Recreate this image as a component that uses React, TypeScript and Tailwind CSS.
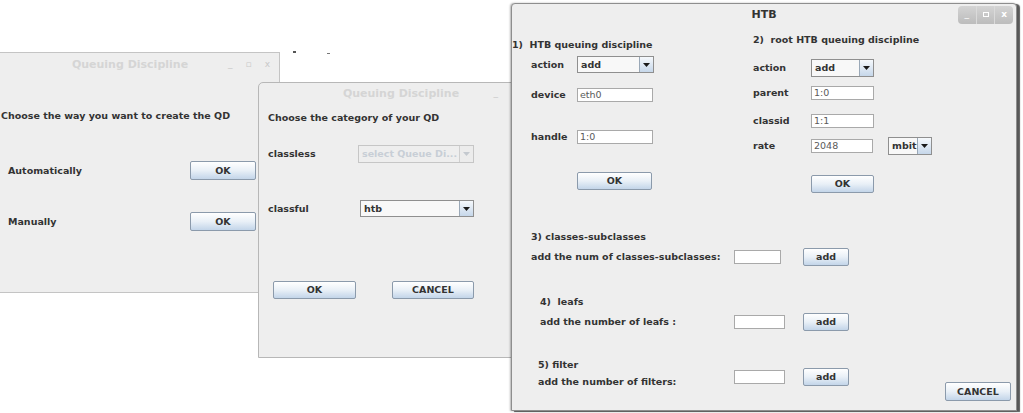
import React from "react";

const FONT = "font-['DejaVu_Sans',sans-serif]";

function Arrow({ disabled }: { disabled?: boolean }) {
  return (
    <svg width="7" height="4" viewBox="0 0 7 4">
      <polygon points="0,0 7,0 3.5,4" fill={disabled ? "#c4c9cf" : "#1a1a1a"} />
    </svg>
  );
}

function Btn({ className, children }: { className: string; children: React.ReactNode }) {
  return (
    <div
      className={`flex items-center justify-center shrink-0 border border-[#8b9aab] rounded-[2px] bg-linear-to-b from-[#ffffff] via-[#e9f0f7] to-[#c3d5e9] text-[#333333] font-bold text-[9.5px] leading-none ${className}`}
    >
      {children}
    </div>
  );
}

function Combo({ className, text, disabled }: { className: string; text: string; disabled?: boolean }) {
  return (
    <div
      className={`flex shrink-0 border ${disabled ? "border-[#c6c6c6] bg-[#eeeeee]" : "border-[#8f8f8f] bg-[#f8f8f8]"} ${className}`}
    >
      <div
        className={`flex-1 flex items-center pl-[3px] font-bold text-[9.5px] leading-none overflow-hidden whitespace-nowrap ${disabled ? "text-[#c8ced6]" : "text-[#333333]"}`}
      >
        {text}
      </div>
      <div
        className={`w-[14px] shrink-0 flex items-center justify-center border-l ${disabled ? "border-[#cfcfcf] bg-[#ececec]" : "border-[#9aa8b7] bg-linear-to-b from-[#f6f9fc] to-[#c6d7ea]"}`}
      >
        <Arrow disabled={disabled} />
      </div>
    </div>
  );
}

function Field({ className, text }: { className: string; text?: string }) {
  return (
    <div
      className={`flex items-center shrink-0 bg-white border border-[#a9a9a9] pl-[2px] font-normal text-[9.5px] leading-none text-[#5a5a5a] ${className}`}
    >
      {text}
    </div>
  );
}

function Lbl({ className, children }: { className: string; children: React.ReactNode }) {
  return <div className={`shrink-0 whitespace-nowrap leading-[12px] ${className}`}>{children}</div>;
}

export default function App() {
  return (
    <div className={`relative w-[1023px] h-[413px] overflow-hidden bg-white ${FONT}`}>
      {/* tiny marks behind */}
      <div className="absolute left-[293px] top-[51px] w-[3px] h-[2px] bg-[#555555]" />
      <div className="absolute left-[327px] top-[53px] w-[3px] h-[1px] bg-[#777777]" />

      {/* Window 1 */}
      <div className="absolute left-[-12px] top-[52px] w-[292px] h-[241px] bg-[#eeeeee] border border-[#c4c4c4] flex flex-col">
        <div className="h-[22px] grid grid-cols-[1fr_auto_1fr] items-center">
          <div />
          <div className="font-bold text-[11px] text-[#d5d5d5] leading-none -translate-x-[4px]">Queuing Discipline</div>
          <div className="flex justify-end items-center gap-[13px] pr-[9px] text-[9px] text-[#c9c9c9] leading-none">
            <span>_</span>
            <span>▫</span>
            <span>x</span>
          </div>
        </div>
        <div className="flex flex-col pl-[12px] text-[#333333] font-bold text-[9.5px]">
          <Lbl className="mt-[35px] h-[12px]">Choose the way you want to create the QD</Lbl>
          <div className="mt-[39px] flex items-center h-[19px]">
            <Lbl className="w-[189px] pl-[7px]">Automatically</Lbl>
            <Btn className="w-[66px] h-[19px]">OK</Btn>
          </div>
          <div className="mt-[32px] flex items-center h-[19px]">
            <Lbl className="w-[189px] pl-[7px]">Manually</Lbl>
            <Btn className="w-[66px] h-[19px]">OK</Btn>
          </div>
        </div>
      </div>

      {/* Window 2 */}
      <div className="absolute left-[258px] top-[82px] w-[286px] h-[276px] bg-[#eeeeee] border border-[#b7b7b7] rounded-t-[5px] flex flex-col">
        <div className="h-[20px] grid grid-cols-[1fr_auto_1fr] items-center">
          <div />
          <div className="font-bold text-[11px] text-[#d5d5d5] leading-none">Queuing Discipline</div>
          <div className="flex justify-end items-center pr-[45px] text-[9px] text-[#c9c9c9] leading-none">
            <span>_</span>
          </div>
        </div>
        <div className="flex flex-col pl-[9px] text-[#333333] font-bold text-[9.5px]">
          <Lbl className="mt-[9px] h-[12px]">Choose the category of your QD</Lbl>
          <div className="mt-[21px] flex items-center h-[18px]">
            <Lbl className="w-[90px]">classless</Lbl>
            <Combo className="w-[116px] h-[18px]" text="select Queue Di..." disabled />
          </div>
          <div className="mt-[37px] flex items-center h-[17px]">
            <Lbl className="w-[92px]">classful</Lbl>
            <Combo className="w-[114px] h-[17px]" text="htb" />
          </div>
          <div className="mt-[64px] flex items-center pl-[5px]">
            <Btn className="w-[83px] h-[18px]">OK</Btn>
            <Btn className="w-[82px] h-[18px] ml-[36px]">CANCEL</Btn>
          </div>
        </div>
      </div>

      {/* Window 3 - HTB */}
      <div className="absolute left-[511px] top-[3px] w-[506px] h-[408px] bg-[#eeeeee] border border-[#8e8e8e] rounded-t-[4px] shadow-[-1px_0_2px_rgba(0,0,0,0.3),3px_1px_1px_rgba(0,0,0,0.65)] flex flex-col">
        <div className="h-[21px] grid grid-cols-[1fr_auto_1fr] items-center">
          <div />
          <div className="font-bold text-[11px] text-[#333333] leading-none">HTB</div>
          <div className="flex justify-end pr-[3px]">
            <div className="flex h-[18px] w-[55px] rounded-[4px] bg-linear-to-b from-[#d4d4d4] to-[#bcbcbc] text-white text-[9px] leading-none overflow-hidden">
              <div className="flex-1 flex items-end justify-center pb-[5px] border-r border-[#dadada]">_</div>
              <div className="flex-1 flex items-center justify-center border-r border-[#dadada]">
                <div className="w-[6px] h-[5px] border-[1.5px] border-white" />
              </div>
              <div className="flex-1 flex items-center justify-center font-bold">x</div>
            </div>
          </div>
        </div>

        <div className="flex-1 flex flex-col text-[#333333] font-bold text-[9.5px]">
          <div className="flex items-start">
            {/* Column 1 */}
            <div className="w-[241px] flex flex-col">
              <Lbl className="mt-[14px] h-[12px] whitespace-pre">1)  HTB queuing discipline</Lbl>
              <div className="mt-[5px] flex items-center h-[17px] pl-[19px]">
                <Lbl className="w-[46px]">action</Lbl>
                <Combo className="w-[77px] h-[17px]" text="add" />
              </div>
              <div className="mt-[15px] flex items-center h-[14px] pl-[19px]">
                <Lbl className="w-[46px]">device</Lbl>
                <Field className="w-[76px] h-[14px]" text="eth0" />
              </div>
              <div className="mt-[28px] flex items-center h-[14px] pl-[19px]">
                <Lbl className="w-[46px]">handle</Lbl>
                <Field className="w-[76px] h-[14px]" text="1:0" />
              </div>
              <div className="mt-[28px] pl-[65px]">
                <Btn className="w-[75px] h-[18px]">OK</Btn>
              </div>
            </div>
            {/* Column 2 */}
            <div className="flex flex-col">
              <Lbl className="mt-[9px] h-[12px] whitespace-pre">2)  root HTB queuing discipline</Lbl>
              <div className="mt-[13px] flex items-center h-[18px]">
                <Lbl className="w-[58px]">action</Lbl>
                <Combo className="w-[63px] h-[18px]" text="add" />
              </div>
              <div className="mt-[9px] flex items-center h-[14px]">
                <Lbl className="w-[58px]">parent</Lbl>
                <Field className="w-[63px] h-[14px]" text="1:0" />
              </div>
              <div className="mt-[14px] flex items-center h-[14px]">
                <Lbl className="w-[58px]">classid</Lbl>
                <Field className="w-[63px] h-[14px]" text="1:1" />
              </div>
              <div className="mt-[9px] flex items-center h-[18px]">
                <Lbl className="w-[58px]">rate</Lbl>
                <Field className="w-[62px] h-[14px]" text="2048" />
                <Combo className="w-[44px] h-[18px] ml-[15px]" text="mbit" />
              </div>
              <div className="mt-[20px] pl-[58px]">
                <Btn className="w-[63px] h-[18px]">OK</Btn>
              </div>
            </div>
          </div>

          <div className="flex-1 flex justify-between">
            <div className="flex flex-col pl-[19px]">
              <Lbl className="mt-[38px] h-[12px]">3) classes-subclasses</Lbl>
              <div className="mt-[5px] flex items-center h-[18px]">
                <Lbl className="w-[203px]">add the num of classes-subclasses:</Lbl>
                <Field className="w-[47px] h-[14px]" />
                <Btn className="w-[46px] h-[18px] ml-[22px]">add</Btn>
              </div>
              <Lbl className="mt-[30px] h-[12px] pl-[9px] whitespace-pre">4)  leafs</Lbl>
              <div className="mt-[5px] flex items-center h-[18px]">
                <Lbl className="w-[203px] pl-[9px]">add the number of leafs :</Lbl>
                <Field className="w-[51px] h-[14px]" />
                <Btn className="w-[46px] h-[18px] ml-[18px]">add</Btn>
              </div>
              <Lbl className="mt-[28px] h-[12px] pl-[7px]">5) filter</Lbl>
              <div className="mt-[-3px] flex items-start">
                <Lbl className="w-[203px] pl-[7px] pt-[8px] h-[20px]">add the number of filters:</Lbl>
                <Field className="w-[51px] h-[14px] mt-[2px]" />
                <Btn className="w-[46px] h-[18px] ml-[18px]">add</Btn>
              </div>
            </div>
            <div className="self-end mb-[9px] mr-[5px]">
              <Btn className="w-[66px] h-[19px]">CANCEL</Btn>
            </div>
          </div>
        </div>
      </div>
    </div>
  );
}
